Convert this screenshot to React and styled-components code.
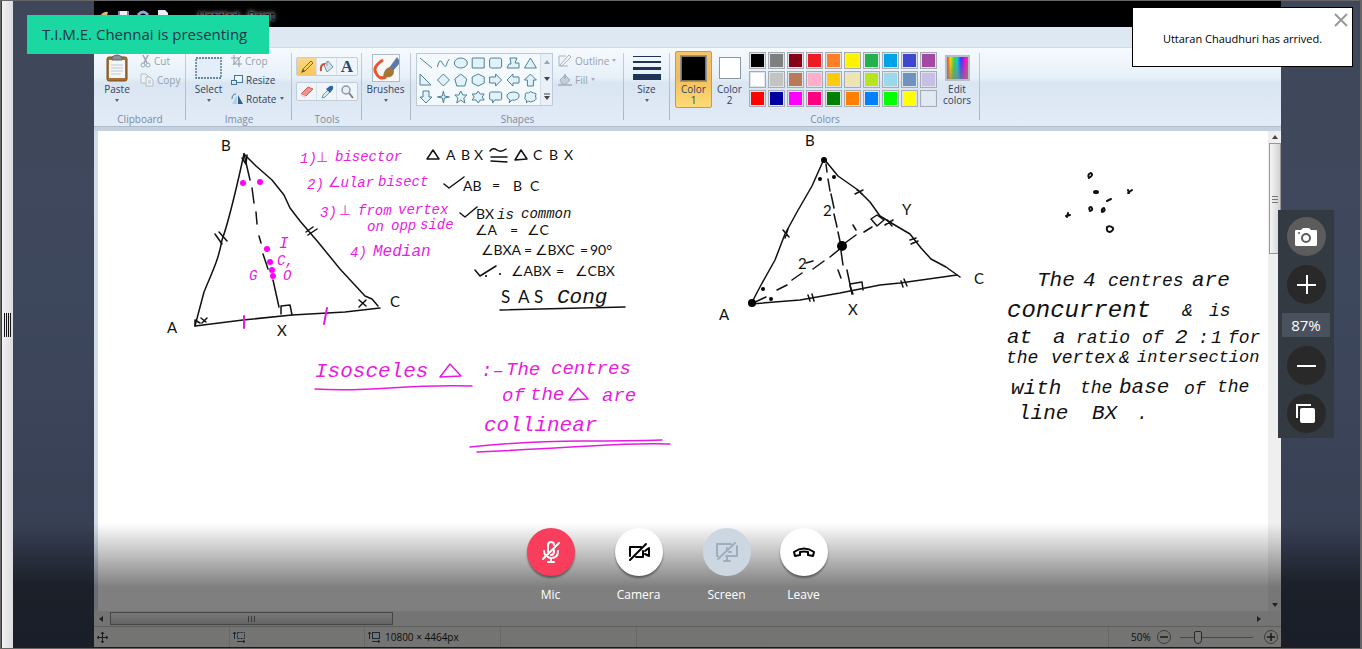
import React from "react";
import styled, { createGlobalStyle } from "styled-components";

const UI_FONT = '"Open Sans", "Noto Sans", sans-serif';

const GlobalStyle = createGlobalStyle`
  *, *::before, *::after { box-sizing: border-box; }
  body { margin: 0; font-family: ${UI_FONT}; background: #3e475b; }
  button { font: inherit; color: inherit; border: 0; padding: 0; background: none; cursor: pointer; }
  svg { display: block; flex: none; }
`;

/* ---------- frame ---------- */

const Frame = styled.div`
  display: flex;
  height: 100vh;
  border: solid #666;
  border-width: 1px 2px 1px 1px;
  overflow: hidden;
`;

const Splitter = styled.div`
  flex: none;
  width: 12px;
  display: flex;
  align-items: center;
  justify-content: center;
  gap: 1px;
  border-left: 1px solid #3c3c44;
  background: linear-gradient(90deg, #f2f2f3, #dcdcdf);
`;

const SplitterLine = styled.span`
  width: 1px;
  height: 24px;
  background: #111;
`;

const Meeting = styled.main`
  position: relative;
  flex: 1;
  min-width: 0;
  display: flex;
  padding: 0 79px 0 81px;
  background: linear-gradient(#40475b, #3e485c 45%, #3a4257 70%, #353d50);
`;

const Screen = styled.section`
  flex: 1;
  min-width: 0;
  display: flex;
  flex-direction: column;
  background: #c5d2e1;
  color: #33415f;
  font-size: 10px;
  line-height: 12px;
`;

/* ---------- title bar and ribbon ---------- */

const TitleBar = styled.header`
  flex: none;
  height: 26px;
  display: flex;
  align-items: center;
  gap: 6px;
  padding: 4px 2px 0;
  background: #000;
`;

const TitleText = styled.span`
  margin-left: 22px;
  color: #000;
  font-size: 11px;
  text-shadow: 0 0 3px #ccc, 0 0 5px #bbb, 0 0 7px #aaa;
`;

const TabStrip = styled.div`
  flex: none;
  height: 21px;
  background: #dde8f2;
  border-bottom: 1px solid #cfdae6;
`;

const Ribbon = styled.div`
  flex: none;
  height: 78px;
  display: flex;
  background: linear-gradient(#f6fafe, #e6f0f8 38%, #d9e5f1 45%, #e2ecf8);
`;

const Group = styled.section`
  flex: none;
  width: ${(p) => p.$width}px;
  display: flex;
  flex-direction: column;
  padding-top: 3px;
  background: linear-gradient(#c3cedb, #a9b5c5) right 5px / 1px 67px no-repeat;
`;

const GroupBody = styled.div`
  flex: 1;
  display: flex;
  align-items: flex-start;
  padding-left: ${(p) => p.$pad || 0}px;
`;

const GroupLabel = styled.h2`
  margin: 0;
  padding-bottom: 1px;
  font-size: 10px;
  line-height: 12px;
  font-weight: 400;
  text-align: center;
  color: #7c8aa0;
`;

const BigButton = styled.button`
  width: ${(p) => p.$width}px;
  height: 57px;
  display: flex;
  flex-direction: column;
  align-items: center;
  line-height: 11px;
  white-space: pre-line;
  border-radius: 2px;
  border: 1px solid ${(p) => (p.$active ? "#c99a45" : "transparent")};
  background: ${(p) => (p.$active ? "linear-gradient(#f3c56c, #f5bd58 45%, #fddb78)" : "none")};
`;

const IconBox = styled.span`
  height: 32px;
  display: flex;
  align-items: center;
  justify-content: center;
`;

const Caret = styled.i`
  width: 0;
  height: 0;
  border: solid transparent;
  border-width: 3px 2px 0;
  border-top-color: ${(p) => (p.$dim ? "#a5aebb" : "#56617a")};
  margin: ${(p) => (p.$below ? "4px" : "0")} 0 0 ${(p) => (p.$below ? "0" : "3px")};
`;

const Stack = styled.div`
  display: flex;
  flex-direction: column;
  align-items: flex-start;
`;

const SmallButton = styled.button`
  height: 19px;
  display: flex;
  align-items: center;
  color: ${(p) => (p.$dim ? "#98a1af" : "#33415f")};

  svg { margin-right: 3px; }
`;

const ToolRow = styled.div`
  display: flex;
  height: 19px;
  margin-top: 6px;
  border: 1px solid #c2cddb;
  border-radius: 2px;
  background: #f0f5fa;
`;

const ToolCell = styled.button`
  width: 20px;
  display: grid;
  place-items: center;
  border-right: 1px solid #d9e1ea;
  background: ${(p) => (p.$active ? "linear-gradient(#fbd68a, #f9c75b)" : "none")};
  &:last-child { border-right: 0; }
`;

const LetterA = styled.b`
  font: 700 17px/17px "Liberation Serif", serif;
  color: #26466a;
`;

const Gallery = styled.div`
  display: flex;
  height: 53px;
  margin: 2px 5px 0 0;
  border: 1px solid #bccada;
  background: #f4f9fd;
`;

const GalleryScroll = styled.div`
  width: 12px;
  display: flex;
  flex-direction: column;
  align-items: center;
  justify-content: space-around;
  border-left: 1px solid #d3dde8;
  background: #e9f0f7;
`;

const ColorChip = styled.span`
  width: ${(p) => p.$size}px;
  height: ${(p) => p.$size}px;
  background: ${(p) => p.$color};
  border: 1px solid #8d95a1;
  box-shadow: inset 0 0 0 1px ${(p) => (p.$rim ? "#7f7450" : "#fff")};
`;

const Spectrum = styled.span`
  width: 25px;
  height: 26px;
  border: 2px solid #b9bec6;
  background: linear-gradient(transparent, rgba(128, 128, 128, 0.7)),
    linear-gradient(90deg, #f33, #fd0, #3d3, #0cf, #33f, #e0e, #f36);
`;

const Palette = styled.div`
  display: grid;
  grid-template-columns: repeat(10, 17px);
  grid-auto-rows: 17px;
  gap: 2px;
  margin: 1px 4px 0 2px;
`;

const Swatch = styled.button`
  border: 1px solid #a5acb5;
  box-shadow: inset 0 0 0 1px #dfe4ea;
  background: ${(p) => p.$color};
`;

const RibbonEdge = styled.div`
  flex: none;
  height: 5px;
  background: #c3d0df;
  border-top: 1px solid #aebccb;
`;

/* ---------- canvas and scroll bars ---------- */

const Workspace = styled.div`
  flex: 1;
  min-height: 0;
  display: flex;
`;

const Canvas = styled.div`
  flex: 1;
  min-width: 0;
  overflow: hidden;
  background: #fff;
  border-left: 4px solid #d3dcea;
`;

const VScroll = styled.div`
  flex: none;
  width: 13px;
  display: flex;
  flex-direction: column;
  align-items: center;
  justify-content: space-between;
  background: #efefef;
`;

const VThumb = styled.div`
  flex: none;
  width: 12px;
  height: 111px;
  display: grid;
  place-items: center;
  border: 1px solid #979797;
  background: linear-gradient(90deg, #f5f5f5, #d2d2d2);
`;

const Spacer = styled.div`
  flex: 1;
`;

const HScroll = styled.div`
  flex: none;
  height: 15px;
  display: flex;
  align-items: center;
  padding: 0 19px 0 4px;
  gap: 6px;
  background: #e8e8e8;
`;

const HThumb = styled.div`
  width: 283px;
  height: 13px;
  display: grid;
  place-items: center;
  border: 1px solid #8b8b8b;
  background: linear-gradient(#f1f1f1, #c9c9c9);
`;

const ArrowButton = styled.button`
  height: 12px;
  display: grid;
  place-items: center;
`;

/* ---------- status bar ---------- */

const StatusBar = styled.footer`
  flex: none;
  height: 22px;
  display: flex;
  align-items: center;
  border-top: 1px solid #bbb;
  border-bottom: 1px solid #33353c;
  background: #e9e9e6;
  color: #1b1b1b;
`;

const StatusCell = styled.div`
  height: 20px;
  width: ${(p) => (p.$width ? `${p.$width}px` : "auto")};
  flex: ${(p) => (p.$width ? "none" : 1)};
  display: flex;
  align-items: center;
  gap: 4px;
  padding-left: 3px;
  border-right: 1px solid #d0d0cf;
`;

const ZoomControl = styled.label`
  width: 172px;
  display: flex;
  align-items: center;
  padding: 0 3px 0 22px;
  gap: 6px;
`;

const RoundButton = styled.button`
  width: 14px;
  height: 14px;
  flex: none;
  display: grid;
  place-items: center;
  border: 1px solid #777;
  border-radius: 50%;
`;

const Range = styled.input`
  appearance: none;
  flex: 1;
  min-width: 0;
  height: 14px;
  margin: 0 5px 0 3px;
  background: linear-gradient(#909090, #909090) center / 100% 1px no-repeat;

  &::-webkit-slider-thumb {
    appearance: none;
    width: 8px;
    height: 13px;
    border: 1px solid #555;
    border-radius: 2px 2px 4px 4px;
    background: #f0f0f0;
  }
`;

/* ---------- overlays of the meeting ---------- */

const Presenting = styled.div`
  position: absolute;
  left: 14px;
  top: 14px;
  padding: 0 22px 0 15px;
  line-height: 39px;
  font-size: 15px;
  color: #20344b;
  background: #1ad8a1;
`;

const Toast = styled.div`
  position: absolute;
  right: 7px;
  top: 6px;
  width: 221px;
  height: 60px;
  display: grid;
  place-items: center;
  padding-top: 3px;
  border: 1px solid #000;
  background: #fff;
  color: #000;
  font-size: 11px;
`;

const ToastClose = styled.button`
  position: absolute;
  right: 4px;
  top: 5px;
`;

const ZoomPanel = styled.aside`
  position: absolute;
  right: 26px;
  top: 209px;
  width: 56px;
  display: flex;
  flex-direction: column;
  align-items: center;
  gap: 9px;
  padding: 7px 0 5px;
  background: #343a41;
`;

const ZoomButton = styled.button`
  width: 39px;
  height: 39px;
  display: grid;
  place-items: center;
  border-radius: 50%;
  background: ${(p) => (p.$light ? "#5c5c5c" : "#292929")};
`;

const ZoomValue = styled.output`
  width: 48px;
  line-height: 24px;
  text-align: center;
  font-size: 15px;
  color: #fff;
  background: #49515d;
`;

const CallBar = styled.nav`
  position: absolute;
  left: 0;
  right: 0;
  bottom: 0;
  height: 125px;
  display: flex;
  justify-content: center;
  align-items: flex-start;
  gap: 29px;
  padding: 5px 19px 0 0;
  background: linear-gradient(rgba(0, 0, 0, 0), rgba(0, 0, 0, 0.5) 64px);
`;

const CallGroup = styled.div`
  display: flex;
  gap: 40px;
`;

const CallButton = styled.button`
  width: 48px;
  display: flex;
  flex-direction: column;
  align-items: center;
  gap: 10px;
  color: #fff;
  font-size: 12px;
  line-height: 18px;
`;

const tones = {
  off: ["#f83e5c", "#fff"],
  plain: ["#fff", "#000"],
  disabled: ["#cdd7e2", "#9fadc0"],
};

const CallDisc = styled.span`
  width: 48px;
  height: 48px;
  display: grid;
  place-items: center;
  border-radius: 50%;
  background: ${(p) => tones[p.$tone][0]};
  color: ${(p) => tones[p.$tone][1]};
  box-shadow: ${(p) => (p.$tone === "disabled" ? "none" : "0 2px 2px rgba(0, 0, 0, 0.4)")};
`;

/* ---------- handwriting on the canvas ---------- */

const Hand = styled.text`
  font-family: ${(p) => (p.$upright ? '"Lato", "DejaVu Sans", sans-serif' : '"Liberation Mono", "DejaVu Sans", monospace')};
  font-style: ${(p) => (p.$upright ? "normal" : "italic")};
  font-size: ${(p) => p.$size}px;
  fill: ${(p) => (p.$pink ? "#e81be0" : "#111")};
`;

const Stroke = styled.path`
  fill: none;
  stroke: ${(p) => (p.$pink ? "#e81be0" : "#111")};
  stroke-width: ${(p) => p.$w || 1.5};
  stroke-linecap: round;
  stroke-linejoin: round;
`;

function Words({ items, size, upright, pink }) {
  return items.map(([x, y, text, ownSize]) => (
    <Hand key={`${x}-${y}`} x={x} y={y} $size={ownSize || size} $upright={upright} $pink={pink}>
      {text}
    </Hand>
  ));
}

const pinkNotes = [
  [300, 163, "1)"], [316, 162, "⊥"], [335, 161, "bisector"],
  [307, 189, "2)"], [328, 187, "∠ular"], [378, 186, "bisect"],
  [320, 217, "3)"], [339, 215, "⊥"], [358, 215, "from"], [398, 214, "vertex"],
  [367, 231, "on"], [391, 230, "opp"], [420, 229, "side"],
  [350, 257, "4)"], [373, 256, "Median", 16],
];
const pinkTitle = [
  [315, 377, "Isosceles", 21],
  [481, 376, ":–"], [506, 375, "The"], [551, 374, "centres"],
  [502, 401, "of"], [530, 400, "the"], [602, 401, "are"],
  [484, 431, "collinear", 21],
];
const proof = [
  [446, 160, "A"], [461, 160, "B"], [474, 160, "X"], [533, 160, "C"], [549, 160, "B"], [564, 160, "X"],
  [463, 191, "AB"], [492, 190, "="], [513, 191, "B"], [530, 191, "C"],
  [476, 219, "BX"], [475, 235, "∠A"], [510, 235, "="], [527, 235, "∠C"],
  [481, 255, "∠BXA"], [524, 255, "="], [535, 255, "∠BXC"], [580, 255, "="], [590, 255, "90°"],
  [511, 276, "∠ABX"], [556, 276, "="], [575, 276, "∠CBX"],
];
const letters = [
  [221, 151, "B"], [167, 333, "A"], [277, 336, "X"], [390, 307, "C"],
  [805, 146, "B"], [719, 320, "A"], [848, 315, "X"], [974, 284, "C"], [902, 215, "Y"],
  [823, 216, "2"], [798, 269, "2"],
];
const conclusion = [
  [1037, 286, "The", 21], [1083, 286, "4", 21], [1108, 286, "centres"], [1192, 286, "are", 21],
  [1007, 317, "concurrent", 24], [1182, 316, "&"], [1209, 316, "is"],
  [1007, 343, "at", 21], [1053, 343, "a", 21], [1076, 343, "ratio"], [1142, 343, "of"], [1175, 343, "2", 21], [1198, 343, ":"], [1211, 343, "1"], [1228, 343, "for"],
  [1006, 363, "the"], [1051, 363, "vertex"], [1119, 363, "&"], [1137, 362, "intersection", 17],
  [1011, 394, "with", 21], [1080, 393, "the"], [1119, 393, "base", 21], [1184, 394, "of"], [1217, 392, "the"],
  [1018, 419, "line", 21], [1092, 419, "BX", 21], [1137, 419, "."],
];

function Drawing() {
  return (
    <svg width="1170" height="481" viewBox="98 131 1170 481" role="img" aria-label="Geometry notes">
      {/* isosceles triangle */}
      <Stroke d="M244 154C236 190 230 218 222 240C218 262 212 272 204 292L195 326L243 320L292 315L345 312L380 308" />
      <Stroke d="M244 154L256 166L272 180L284 195L290 208L300 221L318 242L340 269L365 296L372 299L378 306" />
      <Stroke d="M244 154L250 180M252 188L254 203M256 212L257 224M259 236L261 243M263 254L268 269M273 280L279 307" />
      <Stroke d="M242 158L246 164L247 155M195 326L195 320L200 323M281 314V306L290 305L292 315M215 234L222 244M219 232L227 241M306 232L313 227M308 235L317 229" />
      <Stroke d="M201 318L206 322M207 318L202 323M359 300L366 306M366 300L359 307" />
      <Stroke $pink d="M244 316V328M327 308L324 324" $w={2} />
      <g fill="#f0f">
        <circle cx="243" cy="183" r="3" />
        <circle cx="260" cy="182" r="3" />
        <circle cx="267" cy="249" r="3" />
        <circle cx="270" cy="262" r="3" />
        <circle cx="272" cy="270" r="3" />
        <circle cx="273" cy="276" r="3" />
      </g>
      <Words pink size={14} items={[[279, 248, "I", 16], [277, 265, "C,"], [249, 280, "G"], [283, 280, "O"]]} />

      {/* proof */}
      <Stroke d="M427 159L433 150L439 159ZM515 160L521 150L527 159Z" />
      <Stroke d="M490 151Q493 147 497 150T506 149M491 157H507M491 161L507 162M444 184L449 188L464 177M460 213L465 217L477 207M475 270L480 276L496 266" />
      <circle cx="486" cy="276" r="1" />
      <circle cx="500" cy="274" r="1" />
      <Words upright size={14} items={proof} />
      <Words size={14} items={[[497, 219, "is"], [521, 218, "common"]]} />
      <Words upright size={17} items={[[501, 303, "S"], [518, 303, "A"], [534, 303, "S"]]} />
      <Words size={21} items={[[557, 303, "Cong"]]} />
      <Stroke d="M500 310L625 307" />

      {/* pink notes */}
      <Words pink size={14} items={pinkNotes} />
      <Words pink size={19} items={pinkTitle} />
      <Stroke $pink d="M440 377L450 364L461 376ZM569 400L578 388L588 399Z" />
      <Stroke $pink d="M315 389Q345 391 390 388T472 386M470 447Q530 441 580 441T662 440M477 452Q540 449 590 446T670 444" />

      {/* general triangle */}
      <Stroke d="M824 159L812 186L797 212L785 234L775 260L761 285L751 304L800 300L840 293L880 285L900 283L957 275" />
      <Stroke d="M824 159L838 176L858 190L870 202L880 216L893 224L910 234L921 248L931 259L946 267L960 277" />
      <Stroke d="M826 164L827 172M828 179L830 191M831 194L834 208M834 214L837 227M838 232L841 246M841 251L843 265M847 270L852 294" />
      <Stroke d="M751 304L766 297M777 290L787 285M792 280L802 273M813 269L824 261M830 257L841 248M845 243L856 235M864 232L872 227" />
      <Stroke d="M871 219L877 215L884 220L877 226ZM850 284L862 282L863 290M850 286L853 294" />
      <Stroke d="M783 230L789 237M788 229L785 238M855 194L863 190M857 190L862 194M885 225L893 220M887 220L892 226M910 240L916 238M911 244L918 241M808 295L810 301M812 294L814 301M901 281L903 287M904 279L907 286M853 225L856 230M838 270L841 278M806 263L813 261" />
      <circle cx="824" cy="160" r="3" />
      <circle cx="842" cy="246" r="5" />
      <circle cx="752" cy="303" r="4" />
      <circle cx="820" cy="179" r="2" />
      <circle cx="834" cy="177" r="2" />
      <circle cx="763" cy="289" r="2" />
      <circle cx="771" cy="299" r="2" />
      <Words upright size={15} items={letters} />

      {/* loose centres */}
      <Stroke $w={2} d="M1089 178Q1087 174 1091 173Q1094 175 1089 178ZM1107 201L1111 199M1128 193L1132 190M1128 190L1129 193M1066 216L1070 215M1067 217L1068 213M1090 211Q1088 207 1091 207Q1094 210 1090 211ZM1102 212Q1101 209 1104 208Q1106 211 1102 212Z" />
      <Stroke d="M1107 227Q1106 232 1110 232Q1114 230 1113 228Q1110 225 1107 227" $w={2} />
      <ellipse cx="1096" cy="192" rx="3" ry="2" fill="#111" />
      <Words size={18} items={conclusion} />
    </svg>
  );
}

/* ---------- icons ---------- */

function Svg({ w, h, children, ...rest }) {
  return (
    <svg width={w} height={h} viewBox={`0 0 ${w} ${h}`} fill="none" aria-hidden="true" {...rest}>
      {children}
    </svg>
  );
}

const PasteIcon = () => (
  <Svg w={24} h={28}>
    <rect x="2" y="3" width="20" height="24" rx="2" fill="#a87134" stroke="#7a4c1c" />
    <rect x="4" y="6" width="16" height="18" fill="#f5f6f8" />
    <path d="M6 11H18M6 14H18M6 17H18M6 20H16" stroke="#c1c8d0" />
    <path d="M7 6V3Q12-1 17 3V6Z" fill="#8a8f96" stroke="#5f646b" />
  </Svg>
);
const CutIcon = () => (
  <Svg w={11} h={14} stroke="#9aa3b1">
    <path d="M3 1L7 9M8 1L4 9" strokeWidth="1.5" />
    <circle cx="3" cy="11" r="2" />
    <circle cx="8" cy="11" r="2" />
  </Svg>
);
const CopyIcon = () => (
  <Svg w={14} h={14} stroke="#b5bdc9">
    <path d="M1 1H6L8 3V10H1Z" fill="#eef2f7" />
    <path d="M6 4H10L13 7V13H6ZM8 8H11M8 10H11" fill="#eef2f7" />
  </Svg>
);
const SelectIcon = () => (
  <Svg w={27} h={22}>
    <rect x="1" y="1" width="25" height="20" fill="#e3eef8" stroke="#3d6585" strokeWidth="1.3" strokeDasharray="2 1" />
  </Svg>
);
const CropIcon = () => (
  <Svg w={11} h={12} stroke="#8f99a8">
    <path d="M3 0V9H11M0 3H8V12M2 10L10 1" />
  </Svg>
);
const ResizeIcon = () => (
  <Svg w={12} h={12} stroke="#3f7397">
    <rect x="3.5" y="1.5" width="8" height="7" fill="#eff7fc" />
    <rect x="0.5" y="6.5" width="5" height="4" fill="#d6eaf5" />
  </Svg>
);
const RotateIcon = () => (
  <Svg w={12} h={12}>
    <path d="M6 2V11H1Z" fill="#b5d0e2" />
    <path d="M7 2V11H12Z" fill="#29628d" />
    <path d="M1 6Q1 1 5 1" stroke="#3b7ba5" />
  </Svg>
);
const PencilIcon = () => (
  <Svg w={14} h={14}>
    <path d="M2 12L3 9L11 1L13 3L5 11Z" fill="#f4d54b" stroke="#97661a" />
    <path d="M1 13L3 9L5 11Z" fill="#555" />
  </Svg>
);
const BucketIcon = () => (
  <Svg w={15} h={14}>
    <path d="M5 5L9 1L14 7L8 12Z" fill="#cfe2f0" stroke="#7593ad" />
    <path d="M6 4Q1 4 2 11" stroke="#d0492b" strokeWidth="2" />
    <path d="M8 1V6" stroke="#8a9aab" />
  </Svg>
);
const EraserIcon = () => (
  <Svg w={14} h={14}>
    <path d="M1 9L8 2L13 4L6 11Z" fill="#f0938f" stroke="#c9605e" />
    <path d="M1 9L6 11V13L1 11Z" fill="#fbd0cd" />
  </Svg>
);
const DropperIcon = () => (
  <Svg w={14} h={14}>
    <path d="M2 13L3 10L8 5L10 7L5 12Z" fill="#d8ebf7" stroke="#7294ae" />
    <path d="M6 4L10 8L13 4Q14 0 10 1Z" fill="#2b66a8" />
  </Svg>
);
const LensIcon = () => (
  <Svg w={14} h={14}>
    <circle cx="6" cy="5" r="4" fill="#e4eff7" stroke="#8b99a9" strokeWidth="1.5" />
    <path d="M9 8L13 13" stroke="#8c7c72" strokeWidth="2" />
  </Svg>
);
const BrushIcon = () => (
  <Svg w={28} h={28}>
    <rect x="0.5" y="0.5" width="27" height="27" fill="#f6f8fa" stroke="#b1bac6" />
    <path d="M11 6Q0 13 4 19Q7 26 14 23" stroke="#e8562a" strokeWidth="3" />
    <path d="M17 14L25 3L27 6V10L21 17Z" fill="#5c7aa3" />
    <path d="M11 23Q12 14 18 13L22 17Q22 25 11 23Z" fill="#a5763a" />
  </Svg>
);
const SizeIcon = () => (
  <Svg w={28} h={26}>
    <path d="M0 1H28V2H0ZM0 6H28V8H0ZM0 12H28V15H0ZM0 19H28V25H0Z" fill="#1f3558" />
  </Svg>
);
const OutlineIcon = () => (
  <Svg w={14} h={13} stroke="#a9b2be">
    <path d="M8 2H1V12H10M2 11L11 1L13 3L4 12Z" />
  </Svg>
);
const FillIcon = () => (
  <Svg w={14} h={13}>
    <path d="M2 7L7 2L12 7L8 11H4Z" fill="#c6ced9" stroke="#a3adba" />
    <path d="M0 12H14M7 1V6" stroke="#a3adba" strokeWidth="1.5" />
  </Svg>
);

const shapePaths = [
  "M-6-5L6 5", "M-6 4Q-4-6-1 0T3 2T6-4", "M-6.5 0A6.5 5 0 1 1 6.5 0A6.5 5 0 1 1-6.5 0", "M-6-5H6V5H-6Z",
  "M-4-5H4Q6-5 6-3V3Q6 5 4 5H-4Q-6 5-6 3V-3Q-6-5-4-5Z", "M-3-5H4L2 0H6V5H-6L-4 1H-2Z", "M0-5L6 5H-6Z",
  "M-6-6V5H5Z", "M0-6L6 0L0 6L-6 0Z", "M0-6L6-1L4 6H-4L-6-1Z", "M0-6L6-3V3L0 6L-6 3V-3Z",
  "M-6-3H0V-6L6 0L0 6V3H-6Z", "M6-3H0V-6L-6 0L0 6V3H6Z", "M-3 6V0H-6L0-6L6 0H3V6Z",
  "M-3-6V0H-6L0 6L6 0H3V-6Z", "M0-6L1-1L6 0L1 1L0 6L-1 1L-6 0L-1-1Z", "M0-6L2-2H6L3 1L4 6L0 3L-4 6L-3 1L-6-2H-2Z",
  "M0-6L2-3H6L4 0L6 3H2L0 6L-2 3H-6L-4 0L-6-3H-2Z", "M-5-5H5L6-4V2L5 3H-1L-3 6V3H-5L-6 2V-4Z",
  "M-3 3Q-7 1-6-2Q-4-5 0-5Q7-5 6 0Q4 4-1 3L-4 6Z", "M-4 3Q-7 2-5-1Q-6-5-2-4Q0-7 3-4Q7-4 5-1Q7 3 3 4Q0 6-2 4L-4 6Z",
];

const ShapesGrid = () => (
  <Svg w={123} h={51} stroke="#4f8099">
    {shapePaths.map((d, i) => (
      <path key={d} d={d} fill={i > 1 ? "#e2f2fa" : "none"} transform={`translate(${9 + (i % 7) * 17.4} ${9 + Math.floor(i / 7) * 17})`} />
    ))}
  </Svg>
);

const Triangle = ({ turn = 0, color = "#444" }) => (
  <Svg w={6} h={6}>
    <path d="M3 1L6 5H0Z" fill={color} transform={`rotate(${turn} 3 3)`} />
  </Svg>
);
const MoreMark = () => (
  <Svg w={6} h={7}>
    <path d="M0 1H6" stroke="#444" />
    <path d="M0 3H6L3 7Z" fill="#444" />
  </Svg>
);
const Grip = ({ turn = 0 }) => (
  <Svg w={8} h={8} stroke="#777">
    <path d="M1 1.5H7M1 4.5H7M1 7.5H7" transform={`rotate(${turn} 4 4)`} />
  </Svg>
);
const MoveIcon = () => (
  <Svg w={11} h={11} stroke="#333c49">
    <path d="M5.5 0V11M0 5.5H11M4 2L5.5 0L7 2M4 9L5.5 11L7 9M2 4L0 5.5L2 7M9 4L11 5.5L9 7" />
  </Svg>
);
const SizeMark = ({ dashed }) => (
  <Svg w={13} h={12} stroke="#35516b">
    <rect x="4.5" y="1.5" width="7" height="6" strokeDasharray={dashed ? "2 1" : "none"} />
    <path d="M1.5 8V1M0 3L1.5 1L3 3M4 10.5H12M10 9L12 10.5L10 12" />
  </Svg>
);
const Sign = ({ plus }) => (
  <Svg w={8} h={8} stroke="#333" strokeWidth="1.5">
    <path d={plus ? "M0 4H8M4 0V8" : "M0 4H8"} />
  </Svg>
);

const MicOff = () => (
  <Svg w={22} h={24} stroke="currentColor" strokeWidth="2" strokeLinecap="round">
    <path d="M8 12V6Q8 2 11 2Q14 2 14 5M14 10V11Q14 15 11 15M4 11Q4 14 6 16M18 11Q18 18 11 18Q9 18 8 17M11 18V22M8 22H14M3 19L19 3" />
  </Svg>
);
const CameraOff = () => (
  <Svg w={24} h={20} stroke="currentColor" strokeWidth="2" strokeLinejoin="round" strokeLinecap="round">
    <path d="M3 14V5H14M16 9V15H9M3 18L19 2M18 9L22 6V14L18 12" />
  </Svg>
);
const ScreenOff = () => (
  <Svg w={24} h={22} stroke="currentColor" strokeWidth="2" strokeLinecap="round" strokeLinejoin="round">
    <path d="M3 15H2V3H16M22 5V15H11M12 15V20M9 20H15M3 18L20 2M12 7V9M14 11H16" />
  </Svg>
);
const HangUp = () => (
  <Svg w={24} h={12} stroke="currentColor" strokeWidth="2" strokeLinejoin="round">
    <path d="M2 6Q12-1 22 6L21 10L16 9V6Q12 5 8 6V9L3 10Z" />
  </Svg>
);
const PhotoIcon = () => (
  <Svg w={24} h={20}>
    <path d="M2 3H7L9 1H15L17 3H22Q23 3 23 4V17Q23 19 22 19H2Q1 19 1 17V4Q1 3 2 3Z" fill="#fff" />
    <circle cx="12" cy="11" r="4" stroke="#5c5c5c" strokeWidth="2" />
    <circle cx="5" cy="6" r="1" fill="#5c5c5c" />
  </Svg>
);
const LayersIcon = () => (
  <Svg w={20} h={20}>
    <path d="M1 14V1H15" stroke="#fff" strokeWidth="2" />
    <rect x="4" y="4" width="15" height="15" rx="2" fill="#fff" />
  </Svg>
);

/* ---------- page ---------- */

const paletteColors = [
  "#000000", "#7f7f7f", "#880015", "#ed1c24", "#ff7f27", "#fff200", "#22b14c", "#00a2e8", "#3f48cc", "#a349a4",
  "#ffffff", "#c3c3c3", "#b97a57", "#ffaec9", "#ffc90e", "#efe4b0", "#b5e61d", "#99d9ea", "#7092be", "#c8bfe7",
  "#ff0000", "#0000a0", "#ff00ff", "#ff0080", "#008000", "#ff8000", "#0080ff", "#00ff00", "#ffff00", "#e1e9f3",
];

function PaintRibbon() {
  return (
    <Ribbon>
      <Group $width={92}>
        <GroupBody>
          <BigButton $width={46}>
            <IconBox><PasteIcon /></IconBox>
            Paste
            <Caret $below />
          </BigButton>
          <Stack>
            <SmallButton $dim><CutIcon />Cut</SmallButton>
            <SmallButton $dim><CopyIcon />Copy</SmallButton>
          </Stack>
        </GroupBody>
        <GroupLabel>Clipboard</GroupLabel>
      </Group>

      <Group $width={106}>
        <GroupBody>
          <BigButton $width={45}>
            <IconBox><SelectIcon /></IconBox>
            Select
            <Caret $below />
          </BigButton>
          <Stack>
            <SmallButton $dim><CropIcon />Crop</SmallButton>
            <SmallButton><ResizeIcon />Resize</SmallButton>
            <SmallButton><RotateIcon />Rotate<Caret /></SmallButton>
          </Stack>
        </GroupBody>
        <GroupLabel>Image</GroupLabel>
      </Group>

      <Group $width={70}>
        <GroupBody $pad={4}>
          <Stack>
            <ToolRow>
              <ToolCell $active aria-label="Pencil"><PencilIcon /></ToolCell>
              <ToolCell aria-label="Fill with color"><BucketIcon /></ToolCell>
              <ToolCell aria-label="Text"><LetterA>A</LetterA></ToolCell>
            </ToolRow>
            <ToolRow>
              <ToolCell aria-label="Eraser"><EraserIcon /></ToolCell>
              <ToolCell aria-label="Color picker"><DropperIcon /></ToolCell>
              <ToolCell aria-label="Magnifier"><LensIcon /></ToolCell>
            </ToolRow>
          </Stack>
        </GroupBody>
        <GroupLabel>Tools</GroupLabel>
      </Group>

      <Group $width={49}>
        <GroupBody>
          <BigButton $width={47}>
            <IconBox><BrushIcon /></IconBox>
            Brushes
            <Caret $below />
          </BigButton>
        </GroupBody>
      </Group>

      <Group $width={213}>
        <GroupBody $pad={5}>
          <Gallery>
            <ShapesGrid />
            <GalleryScroll>
              <Triangle color="#9aa5b3" />
              <Triangle turn={180} />
              <MoreMark />
            </GalleryScroll>
          </Gallery>
          <Stack>
            <SmallButton $dim><OutlineIcon />Outline<Caret $dim /></SmallButton>
            <SmallButton $dim><FillIcon />Fill<Caret $dim /></SmallButton>
          </Stack>
        </GroupBody>
        <GroupLabel>Shapes</GroupLabel>
      </Group>

      <Group $width={46}>
        <GroupBody>
          <BigButton $width={45}>
            <IconBox><SizeIcon /></IconBox>
            Size
            <Caret $below />
          </BigButton>
        </GroupBody>
      </Group>

      <Group $width={310}>
        <GroupBody $pad={5}>
          <BigButton $width={37} $active>
            <IconBox><ColorChip $size={27} $color="#000" $rim /></IconBox>
            {"Color\n1"}
          </BigButton>
          <BigButton $width={35}>
            <IconBox><ColorChip $size={22} $color="#fff" /></IconBox>
            {"Color\n2"}
          </BigButton>
          <Palette>
            {paletteColors.map((color) => (
              <Swatch key={color} $color={color} aria-label={color} />
            ))}
          </Palette>
          <BigButton $width={32}>
            <IconBox><Spectrum /></IconBox>
            {"Edit\ncolors"}
          </BigButton>
        </GroupBody>
        <GroupLabel>Colors</GroupLabel>
      </Group>
    </Ribbon>
  );
}

function CallItem({ label, tone, icon }) {
  return (
    <CallButton disabled={tone === "disabled"}>
      <CallDisc $tone={tone}>{icon}</CallDisc>
      {label}
    </CallButton>
  );
}

export default function App() {
  return (
    <>
      <GlobalStyle />
      <Frame>
        <Splitter>
          <SplitterLine />
          <SplitterLine />
          <SplitterLine />
          <SplitterLine />
        </Splitter>
        <Meeting>
          <Screen>
            <TitleBar>
              <Svg w={14} h={14}><path d="M2 10Q7 1 12 3L10 10Z" fill="#d8b487" /></Svg>
              <Svg w={14} h={14}><path d="M2 2H13V13H2Z" fill="#8d7bb5" /><path d="M4 2H11V6H4Z" fill="#eee" /></Svg>
              <Svg w={14} h={14}><path d="M2 6Q7 0 12 6" stroke="#8ba9d6" strokeWidth="3" /></Svg>
              <Svg w={14} h={14}><path d="M2 1H9L12 4V13H2Z" fill="#e9eef5" /></Svg>
              <TitleText>Untitled - Paint</TitleText>
            </TitleBar>
            <TabStrip />
            <PaintRibbon />
            <RibbonEdge />
            <Workspace>
              <Canvas><Drawing /></Canvas>
              <VScroll>
                <ArrowButton aria-label="Scroll up"><Triangle /></ArrowButton>
                <VThumb><Grip /></VThumb>
                <Spacer />
                <ArrowButton aria-label="Scroll down"><Triangle turn={180} /></ArrowButton>
              </VScroll>
            </Workspace>
            <HScroll>
              <ArrowButton aria-label="Scroll left"><Triangle turn={-90} /></ArrowButton>
              <HThumb><Grip turn={90} /></HThumb>
              <Spacer />
              <ArrowButton aria-label="Scroll right"><Triangle turn={90} /></ArrowButton>
            </HScroll>
            <StatusBar>
              <StatusCell $width={136}><MoveIcon /></StatusCell>
              <StatusCell $width={135}><SizeMark dashed /></StatusCell>
              <StatusCell $width={136}><SizeMark />10800 × 4464px</StatusCell>
              <StatusCell $width={136} />
              <StatusCell />
              <ZoomControl>
                50%
                <RoundButton aria-label="Zoom out"><Sign /></RoundButton>
                <Range type="range" min="0" max="100" defaultValue="22" aria-label="Zoom" />
                <RoundButton aria-label="Zoom in"><Sign plus /></RoundButton>
              </ZoomControl>
            </StatusBar>
          </Screen>

          <CallBar>
            <CallGroup>
              <CallItem label="Mic" tone="off" icon={<MicOff />} />
              <CallItem label="Camera" tone="plain" icon={<CameraOff />} />
              <CallItem label="Screen" tone="disabled" icon={<ScreenOff />} />
            </CallGroup>
            <CallItem label="Leave" tone="plain" icon={<HangUp />} />
          </CallBar>

          <Presenting>T.I.M.E. Chennai is presenting</Presenting>

          <ZoomPanel>
            <ZoomButton $light aria-label="Snapshot"><PhotoIcon /></ZoomButton>
            <ZoomButton aria-label="Enlarge">
              <Svg w={19} h={19} stroke="#fff" strokeWidth="2"><path d="M0 10H19M10 0V19" /></Svg>
            </ZoomButton>
            <ZoomValue>87%</ZoomValue>
            <ZoomButton aria-label="Reduce">
              <Svg w={19} h={19} stroke="#fff" strokeWidth="2"><path d="M0 10H19" /></Svg>
            </ZoomButton>
            <ZoomButton aria-label="Copy view"><LayersIcon /></ZoomButton>
          </ZoomPanel>

          <Toast role="status">
            Uttaran Chaudhuri has arrived.
            <ToastClose aria-label="Close">
              <Svg w={14} h={14} stroke="#999" strokeWidth="2"><path d="M1 1L13 13M13 1L1 13" /></Svg>
            </ToastClose>
          </Toast>
        </Meeting>
      </Frame>
    </>
  );
}
